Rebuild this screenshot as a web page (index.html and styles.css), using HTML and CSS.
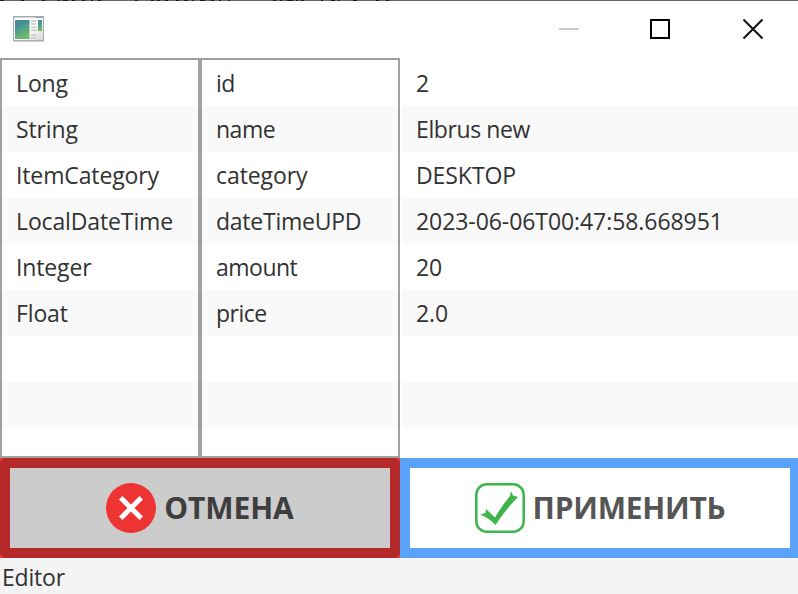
FILE: index.html
```
<!DOCTYPE html>
<html lang="ru">
<head>
<meta charset="utf-8">
<title>Editor</title>
<link rel="stylesheet" href="styles.css">
</head>
<body>
<div class="window">
  <svg class="top-edge" width="798" height="1" viewBox="0 0 798 1"><rect width="798" height="1" fill="#686868"/><path d="M0 .5h4M21 .5h3M42 .5h3M58 .5h2M63 .5h5M72 .5h3M82 .5h3M91 .5h2M98 .5h3M135 .5h3M151 .5h3M157 .5h3M165 .5h3M176 .5h3M184 .5h4M192 .5h2M200 .5h5M211 .5h3M219 .5h2M228 .5h2M273 .5h3M280 .5h2M287 .5h6M296 .5h2M301 .5h3M321 .5h2M331 .5h4M338 .5h2M353 .5h4M376 .5h3M386 .5h3" stroke="#1c1719"/></svg>
  <header class="titlebar">
    <svg class="app-icon" width="32" height="26" viewBox="0 0 32 26">
      <defs>
        <linearGradient id="pane" x1="0" y1="0" x2=".4" y2="1"><stop offset="0" stop-color="#4c86a3"/><stop offset=".5" stop-color="#4f9c8e"/><stop offset="1" stop-color="#70b96c"/></linearGradient>
        <linearGradient id="frame" x1="0" y1="0" x2="1" y2="1"><stop offset=".5" stop-color="#fff"/><stop offset="1" stop-color="#d4d4d4"/></linearGradient>
      </defs>
      <rect x=".5" y=".5" width="30" height="24" fill="url(#frame)" stroke="#a3abb1"/>
      <path d="M1 1.5h29" stroke="#cbd5dd"/>
      <path d="M22 1.5h8" stroke="#9da5aa"/>
      <path d="M0 25.3h31" stroke="#c0c3c5"/>
      <rect x="2" y="4" width="14.500" height="19" fill="url(#pane)"/>
      <path d="M2 14Q7 8 16.500 7V4H2Z" fill="#347d9c" opacity=".3"/>
      <path d="M18 5h5.500M18 8h5.500M18 11h5.500M18 14h5.500M18 19h5.500M18 22h5.500" stroke="#c8c8c8" stroke-width="1.300"/>
      <rect x="25" y="4" width="4" height="11" fill="url(#pane)"/>
    </svg>
    <svg class="controls" width="206" height="22" viewBox="0 0 206 22">
      <path d="M0 11h20" stroke="#cbcbcb" stroke-width="2"/>
      <rect x="92" y="2" width="18" height="18" fill="none" stroke="#000" stroke-width="2"/>
      <path d="M184.500 1.500l19 19M203.500 1.500l-19 19" stroke="#111" stroke-width="2"/>
    </svg>
  </header>
  <main class="lists">
    <ul class="list bordered types">
      <li>Long</li><li>String</li><li>ItemCategory</li><li>LocalDateTime</li><li>Integer</li><li>Float</li><li></li><li></li><li></li>
    </ul>
    <ul class="list bordered names">
      <li>id</li><li>name</li><li class="loose">category</li><li class="mixed">dateTimeUPD</li><li>amount</li><li>price</li><li></li><li></li><li></li>
    </ul>
    <ul class="list values">
      <li>2</li><li class="tight">Elbrus new</li><li>DESKTOP</li><li>2023-06-06T00:47:58.668951</li><li>20</li><li>2.0</li><li></li><li></li><li></li>
    </ul>
  </main>
  <div class="actions">
    <div class="cancel-wrap"><button class="btn cancel">
      <svg width="50" height="50" viewBox="0 0 50 50"><circle cx="25" cy="25" r="25" fill="#ee3333"/><path d="M16.500 16.500l17 17M33.500 16.500l-17 17" stroke="#fff" stroke-width="5" stroke-linecap="square"/></svg>
      <span>ОТМЕНА</span>
    </button></div>
    <button class="btn apply">
      <svg width="50" height="50" viewBox="0 0 50 50"><rect x="1.300" y="1.300" width="47.400" height="47.400" rx="10.500" fill="none" stroke="#3db54a" stroke-width="2.500"/><path d="M5 31.500L10.500 30L11 26L20 34.500Q26 24 35 13L36 8L38 12.500L43 14Q31 26 20.500 42Q14 35 5 31.500Z" fill="#3db54a"/></svg>
      <span>ПРИМЕНИТЬ</span>
    </button>
  </div>
  <footer class="status">Editor</footer>
</div>
</body>
</html>
```
FILE: styles.css
```
* { box-sizing: border-box; }
body { margin: 0; font-family: "Open Sans", "Noto Sans", sans-serif; font-size: 23px; color: #323232; background: #f4f4f4; }
.window { width: 798px; height: 594px; display: flex; flex-direction: column; overflow: hidden; }
.top-edge { display: block; flex: none; }
.titlebar { height: 57px; flex: none; background: #fff; display: flex; justify-content: space-between; align-items: flex-start; padding: 15px 33px 0 13px; }
.controls { margin-top: 2px; }
.lists { height: 400px; flex: none; display: grid; grid-template-columns: 200px 200px 398px; }
.list { list-style: none; margin: 0; padding: 0; border: 2px solid #fff; background: #fff; overflow: hidden; }
.bordered { border-color: #a0a0a0; }
.values { border-right: 0; letter-spacing: -0.07px; }
.types { letter-spacing: -0.13px; }
.names { letter-spacing: -0.5px; }
.names .mixed { letter-spacing: -0.25px; }
.names .loose { letter-spacing: -0.08px; }
.values .tight { letter-spacing: -0.4px; }
.list li { height: 46px; line-height: 46px; padding-left: 14px; white-space: nowrap; }
.list li:nth-child(even) { background: #f9f9f9; }
.actions { height: 100px; flex: none; display: grid; grid-template-columns: 400px 400px; }
.cancel-wrap { background: #ee3333; }
.btn { width: 100%; height: 100%; margin: 0; padding: 0; border: 10px solid; display: flex; align-items: center; justify-content: center; gap: 8px; font: bold 30px/80px "Open Sans", "Noto Sans", sans-serif; white-space: nowrap; }
.btn svg { flex: none; }
.cancel { background: #ccc; border-color: #b5292b; border-radius: 6px; color: #3e3e3e; letter-spacing: -0.1px; }
.apply { background: #fff; border-color: #5aa3fb; color: #555; letter-spacing: -0.25px; }
.status { height: 36px; line-height: 38px; padding-left: 2px; letter-spacing: -0.2px; }
```
